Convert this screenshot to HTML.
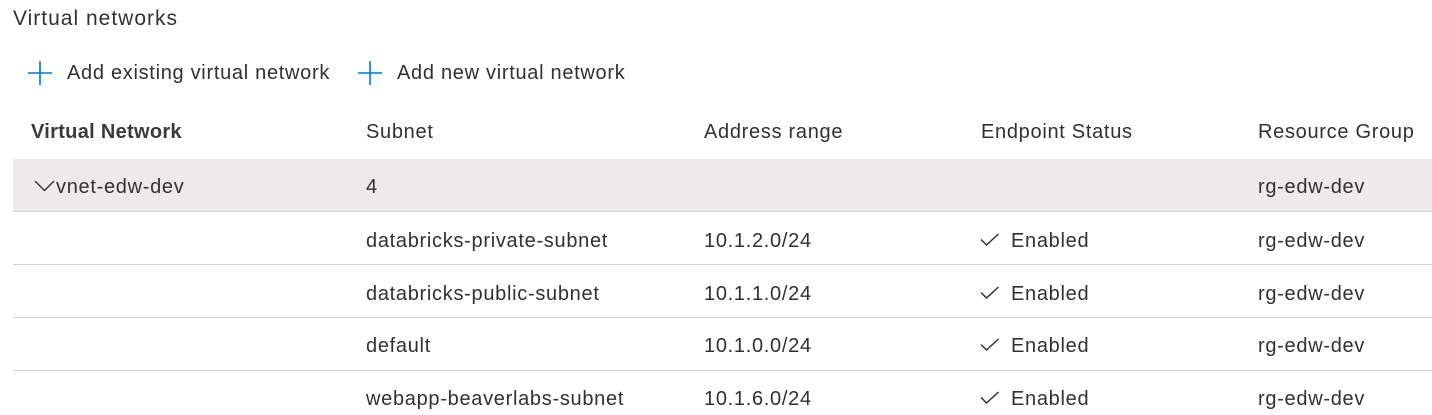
<!DOCTYPE html>
<html><head><style>
body{margin:0;width:1432px;height:415px;background:#fff;font-family:"Liberation Sans",sans-serif;color:#323130;position:relative;overflow:hidden}
.t{position:absolute;white-space:nowrap;font-size:20px;line-height:24px;letter-spacing:0.7px}
.row{position:absolute;left:13px;right:0;height:52px;border-bottom:1px solid #d2d0ce}
svg{position:absolute}
</style></head><body>
<div class="t" style="left:13px;top:7px;font-size:21px;letter-spacing:1px">Virtual networks</div>
<svg style="left:27px;top:60px" width="26" height="26"><path d="M13 1V25M1 13H25" stroke="#0078d4" stroke-width="1.6"/></svg>
<div class="t" style="left:67px;top:61px">Add existing virtual network</div>
<svg style="left:357px;top:60px" width="26" height="26"><path d="M13 1V25M1 13H25" stroke="#0078d4" stroke-width="1.6"/></svg>
<div class="t" style="left:397px;top:61px">Add new virtual network</div>

<div class="t" style="left:31px;top:120px;font-weight:bold;color:#3b3a39;letter-spacing:0.3px">Virtual Network</div>
<div class="t" style="left:366px;top:120px">Subnet</div>
<div class="t" style="left:704px;top:120px">Address range</div>
<div class="t" style="left:981px;top:120px">Endpoint Status</div>
<div class="t" style="left:1258px;top:120px">Resource Group</div>

<div class="row" style="top:159px;background:#edebe9"></div>
<div class="row" style="top:212px"></div>
<div class="row" style="top:265px"></div>
<div class="row" style="top:318px"></div>

<svg style="left:34px;top:179px" width="22" height="14"><path d="M1 2L10.5 11.5L20 2" stroke="#323130" stroke-width="1.4" fill="none"/></svg>
<div class="t" style="left:56px;top:175px">vnet-edw-dev</div>
<div class="t" style="left:366px;top:175px">4</div>
<div class="t" style="left:1258px;top:175px">rg-edw-dev</div>

<div class="t" style="left:366px;top:229px">databricks-private-subnet</div>
<div class="t" style="left:704px;top:229px">10.1.2.0/24</div>
<div class="t" style="left:1258px;top:229px">rg-edw-dev</div>

<div class="t" style="left:366px;top:282px">databricks-public-subnet</div>
<div class="t" style="left:704px;top:282px">10.1.1.0/24</div>
<div class="t" style="left:1258px;top:282px">rg-edw-dev</div>

<div class="t" style="left:366px;top:334px">default</div>
<div class="t" style="left:704px;top:334px">10.1.0.0/24</div>
<div class="t" style="left:1258px;top:334px">rg-edw-dev</div>

<div class="t" style="left:366px;top:387px">webapp-beaverlabs-subnet</div>
<div class="t" style="left:704px;top:387px">10.1.6.0/24</div>
<div class="t" style="left:1258px;top:387px">rg-edw-dev</div>

<svg style="left:980px;top:233px" width="20" height="14"><path d="M1 6.5L6.5 12L18.5 1" stroke="#323130" stroke-width="1.5" fill="none"/></svg>
<div class="t" style="left:1011px;top:229px">Enabled</div>
<svg style="left:980px;top:286px" width="20" height="14"><path d="M1 6.5L6.5 12L18.5 1" stroke="#323130" stroke-width="1.5" fill="none"/></svg>
<div class="t" style="left:1011px;top:282px">Enabled</div>
<svg style="left:980px;top:338px" width="20" height="14"><path d="M1 6.5L6.5 12L18.5 1" stroke="#323130" stroke-width="1.5" fill="none"/></svg>
<div class="t" style="left:1011px;top:334px">Enabled</div>
<svg style="left:980px;top:391px" width="20" height="14"><path d="M1 6.5L6.5 12L18.5 1" stroke="#323130" stroke-width="1.5" fill="none"/></svg>
<div class="t" style="left:1011px;top:387px">Enabled</div>
</body></html>
